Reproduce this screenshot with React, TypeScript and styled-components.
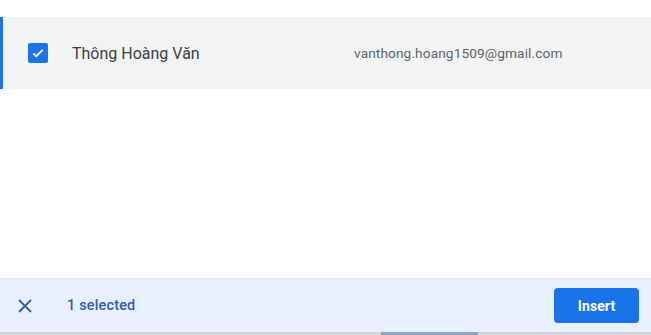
import styled, { createGlobalStyle } from 'styled-components'

const GlobalStyle = createGlobalStyle`
  html, body {
    margin: 0;
    padding: 0;
    background: #ffffff;
    font-family: Roboto, 'Noto Sans', Arial, sans-serif;
  }
`

const Page = styled.div`
  display: flex;
  flex-direction: column;
  width: 651px;
  height: 335px;
  overflow: hidden;
`

const List = styled.div`
  flex: 1;
  padding-top: 17px;
`

const Row = styled.div<{ $selected?: boolean }>`
  display: flex;
  align-items: center;
  height: 72px;
  box-sizing: border-box;
  padding-left: 25px;
  background: ${(p) => (p.$selected ? '#f1f3f4' : '#ffffff')};
  border-left: 3px solid ${(p) => (p.$selected ? '#1a73e8' : 'transparent')};
`

const Check = styled.span`
  display: flex;
  align-items: center;
  justify-content: center;
  width: 20px;
  height: 20px;
  border-radius: 2px;
  background: #1a73e8;
`

const Name = styled.span`
  margin-left: 24px;
  width: 282px;
  font-size: 16px;
  color: #3c4043;
`

const Email = styled.span`
  font-size: 13.7px;
  color: #5f6368;
  letter-spacing: 0.1px;
`

const Footer = styled.div`
  display: flex;
  align-items: center;
  height: 54px;
  padding: 0 12px 0 15px;
  background: #e8f0fe;
  border-top: 1px solid #e3e8f0;
  box-sizing: border-box;
`

const CloseButton = styled.button`
  display: flex;
  align-items: center;
  justify-content: center;
  width: 20px;
  height: 20px;
  padding: 0;
  border: none;
  background: none;
`

const Count = styled.span`
  margin-left: 32px;
  flex: 1;
  font-size: 14.4px;
  font-weight: 500;
  color: #2f5ea8;
  letter-spacing: 0.2px;
`

const InsertButton = styled.button`
  width: 85px;
  height: 35px;
  border: none;
  border-radius: 4px;
  background: #1a73e8;
  color: #ffffff;
  font-family: Roboto, Arial, sans-serif;
  font-size: 14px;
  font-weight: 700;
  letter-spacing: 0.1px;
`

const Strip = styled.div`
  display: flex;
  height: 3px;
  background: #d4d6d9;
`

const Thumb = styled.div`
  margin-left: 381px;
  width: 97px;
  background: #8fa5c4;
`

export default function App() {
  return (
    <>
      <GlobalStyle />
      <Page>
        <List>
          <Row $selected>
            <Check>
              <svg width="14" height="14" viewBox="0 0 24 24">
                <path d="M4 12.5l5 5L20 6.5" fill="none" stroke="#fff" strokeWidth="3" />
              </svg>
            </Check>
            <Name>Thông Hoàng Văn</Name>
            <Email>vanthong.hoang1509@gmail.com</Email>
          </Row>
        </List>
        <Footer>
          <CloseButton>
            <svg width="18" height="18" viewBox="0 0 24 24">
              <path d="M4 4L20 20M20 4L4 20" stroke="#2f5ea8" strokeWidth="2.4" fill="none" />
            </svg>
          </CloseButton>
          <Count>1 selected</Count>
          <InsertButton>Insert</InsertButton>
        </Footer>
        <Strip>
          <Thumb />
        </Strip>
      </Page>
    </>
  )
}
